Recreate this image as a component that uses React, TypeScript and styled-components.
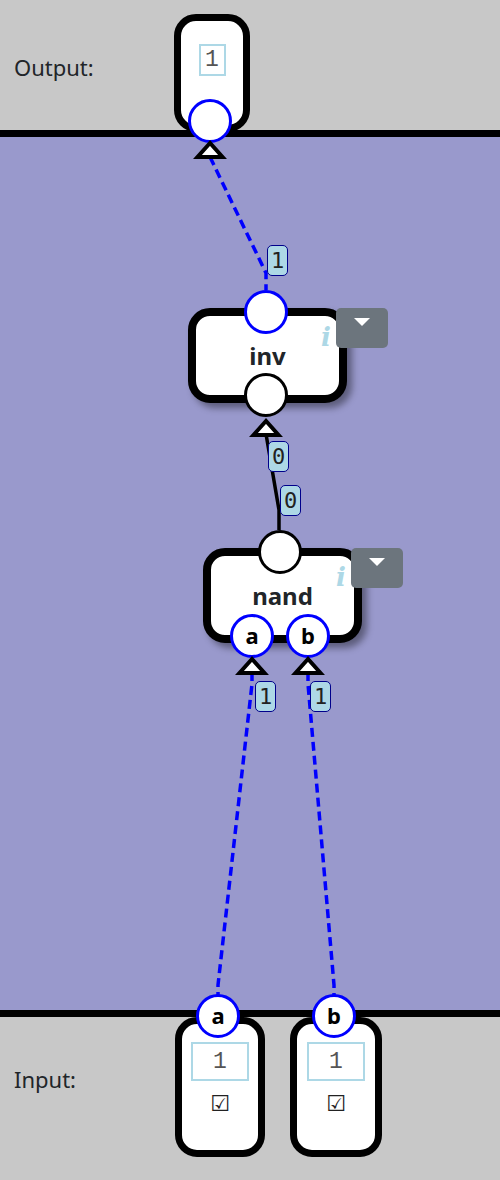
import styled, { createGlobalStyle } from "styled-components";

const GlobalStyle = createGlobalStyle`
  html, body {
    margin: 0;
    padding: 0;
    background: #c8c8c8;
  }
  body {
    font-family: "Noto Sans", "DejaVu Sans", sans-serif;
    color: #212529;
  }
`;

const Page = styled.div`
  position: relative;
  width: 500px;
  height: 1180px;
  overflow: hidden;
  display: flex;
  flex-direction: column;
  background: #c8c8c8;
`;

const OutputBar = styled.div`
  flex: 0 0 130px;
  min-height: 0;
  display: flex;
  padding-left: 14px;
  border-bottom: 7px solid #000;
  position: relative;
  z-index: 1;
`;

const InputBar = styled.div`
  flex: 0 0 163px;
  min-height: 0;
  display: flex;
  gap: 25px;
  padding-left: 14px;
  border-top: 7px solid #000;
  position: relative;
  z-index: 1;
`;

const BarLabel = styled.div<{ $w: number; $h: number; $shift: number }>`
  width: ${(p) => p.$w}px;
  height: ${(p) => p.$h}px;
  box-sizing: border-box;
  padding-top: ${(p) => p.$shift}px;
  display: flex;
  align-items: center;
  font-size: 22px;
  margin-right: -25px;
  flex: none;
`;

const Canvas = styled.div`
  flex: 0 0 873px;
  background: #9999cc;
  position: relative;
`;

const Wires = styled.svg`
  position: absolute;
  left: 0;
  top: 0;
  z-index: 3;
  pointer-events: none;
`;

// output / input cards sitting on the bars
const IoNode = styled.div<{ $w: number; $h: number; $top: number; $pad: number }>`
  flex: none;
  width: ${(p) => p.$w}px;
  height: ${(p) => p.$h}px;
  margin-top: ${(p) => p.$top}px;
  box-sizing: border-box;
  border: 7px solid #000;
  border-radius: 22px;
  background: #fff;
  display: flex;
  flex-direction: column;
  align-items: center;
  padding-top: ${(p) => p.$pad}px;
`;

const ValueBox = styled.div<{ $w: number; $h: number }>`
  width: ${(p) => p.$w}px;
  height: ${(p) => p.$h}px;
  box-sizing: border-box;
  border: 2px solid #add8e6;
  display: flex;
  align-items: center;
  justify-content: center;
  font-family: "Liberation Mono", "DejaVu Sans Mono", monospace;
  font-size: 23px;
  color: #555;
`;

const Check = styled.div`
  margin-top: 10px;
  font-family: "DejaVu Sans", sans-serif;
  font-size: 22px;
  line-height: 26px;
  color: #222;
`;

// gates: nodes on the free canvas
const GateNode = styled.div<{ $x: number; $y: number }>`
  position: absolute;
  left: ${(p) => p.$x}px;
  top: ${(p) => p.$y}px;
  width: 159px;
  height: 95px;
  box-sizing: border-box;
  border: 8px solid #000;
  border-radius: 22px;
  background: #fff;
  box-shadow: 5px 5px 7px rgba(0, 0, 0, 0.4);
  display: flex;
  align-items: center;
  justify-content: center;
  font-size: 24px;
  font-weight: 700;
  color: #212529;
`;

const Info = styled.span`
  position: absolute;
  left: 125px;
  top: 6px;
  font-family: "DejaVu Serif", "Liberation Serif", serif;
  font-style: italic;
  font-weight: 700;
  font-size: 26px;
  line-height: 30px;
  color: #add8e6;
`;

const Dropdown = styled.div`
  position: absolute;
  left: 140px;
  top: -8px;
  width: 52px;
  height: 40px;
  border-radius: 5px;
  background: #6c757d;
  display: flex;
  justify-content: center;
  padding-top: 10px;
  box-sizing: border-box;

  &::after {
    content: "";
    width: 0;
    height: 0;
    border-left: 8px solid transparent;
    border-right: 8px solid transparent;
    border-top: 8px solid #fff;
  }
`;

const Port = styled.div<{ $x: number; $y: number; $active: boolean }>`
  position: absolute;
  left: ${(p) => p.$x - 22}px;
  top: ${(p) => p.$y - 22}px;
  width: 44px;
  height: 44px;
  box-sizing: border-box;
  border-radius: 50%;
  border: 3.5px solid ${(p) => (p.$active ? "#0000ff" : "#000")};
  background: #fff;
  display: flex;
  align-items: center;
  justify-content: center;
  font-family: "Noto Sans", sans-serif;
  font-weight: 700;
  font-size: 22px;
  line-height: 1;
  padding-bottom: 2px;
  color: #000;
  z-index: 2;
`;

const WireLabel = styled.div<{ $x: number; $y: number }>`
  position: absolute;
  left: ${(p) => p.$x}px;
  top: ${(p) => p.$y}px;
  width: 21px;
  height: 31px;
  box-sizing: border-box;
  border: 1.5px solid #00008b;
  border-radius: 5px;
  background: #add8e6;
  display: flex;
  align-items: center;
  justify-content: center;
  font-family: "DejaVu Sans Mono", monospace;
  font-size: 22px;
  color: #222;
  z-index: 4;
`;

interface IWire {
  d: string;
  live: boolean;
}

const wires: IWire[] = [
  { d: "M210 157 L266 273 L266 290", live: true },
  { d: "M266 434 L279 510 L279 530", live: false },
  { d: "M252 672 L252 684 L218 985 L218 995", live: true },
  { d: "M308 672 L308 684 L334 985 L334 995", live: true },
];

const arrows = [
  { x: 210, y: 143 },
  { x: 266, y: 421 },
  { x: 252, y: 659 },
  { x: 308, y: 659 },
];

const labels = [
  { x: 267, y: 245, v: "1" },
  { x: 268, y: 441, v: "0" },
  { x: 280, y: 485, v: "0" },
  { x: 255, y: 681, v: "1" },
  { x: 310, y: 681, v: "1" },
];

const ports = [
  { x: 210, y: 121, active: true, name: "" },
  { x: 266, y: 312, active: true, name: "" },
  { x: 266, y: 395, active: false, name: "" },
  { x: 280, y: 552, active: false, name: "" },
  { x: 252, y: 636, active: true, name: "a" },
  { x: 308, y: 636, active: true, name: "b" },
  { x: 218, y: 1016, active: true, name: "a" },
  { x: 334, y: 1016, active: true, name: "b" },
];

const gates = [
  { name: "inv", x: 188, y: 171 },
  { name: "nand", x: 203, y: 411 },
];

function App() {
  return (
    <Page>
      <GlobalStyle />
      <OutputBar>
        <BarLabel $w={185} $h={130} $shift={4}>
          Output:
        </BarLabel>
        <IoNode $w={76} $h={118} $top={14} $pad={23}>
          <ValueBox $w={27} $h={32}>1</ValueBox>
        </IoNode>
      </OutputBar>

      <Canvas>
        {gates.map((g) => (
          <GateNode key={g.name} $x={g.x} $y={g.y}>
            {g.name}
            <Info>i</Info>
            <Dropdown />
          </GateNode>
        ))}
      </Canvas>

      <InputBar>
        <BarLabel $w={161} $h={124} $shift={0}>
          Input:
        </BarLabel>
        <IoNode $w={90} $h={140} $top={0} $pad={18}>
          <ValueBox $w={58} $h={39}>1</ValueBox>
          <Check>☑</Check>
        </IoNode>
        <IoNode $w={92} $h={140} $top={0} $pad={18}>
          <ValueBox $w={58} $h={39}>1</ValueBox>
          <Check>☑</Check>
        </IoNode>
      </InputBar>

      {ports.map((p, i) => (
        <Port key={i} $x={p.x} $y={p.y} $active={p.active}>
          {p.name}
        </Port>
      ))}

      <Wires width={500} height={1180} viewBox="0 0 500 1180">
        {wires.map((w, i) => (
          <path
            key={i}
            d={w.d}
            fill="none"
            stroke={w.live ? "#0000ff" : "#000"}
            strokeWidth={3.5}
            strokeDasharray={w.live ? "9 5" : undefined}
          />
        ))}
        {arrows.map((a, i) => (
          <polygon
            key={i}
            points={`${a.x},${a.y} ${a.x - 12.5},${a.y + 14} ${a.x + 12.5},${a.y + 14}`}
            fill="#fff"
            stroke="#000"
            strokeWidth={4}
          />
        ))}
      </Wires>

      {labels.map((l, i) => (
        <WireLabel key={i} $x={l.x} $y={l.y}>
          {l.v}
        </WireLabel>
      ))}
    </Page>
  );
}

export default App;
